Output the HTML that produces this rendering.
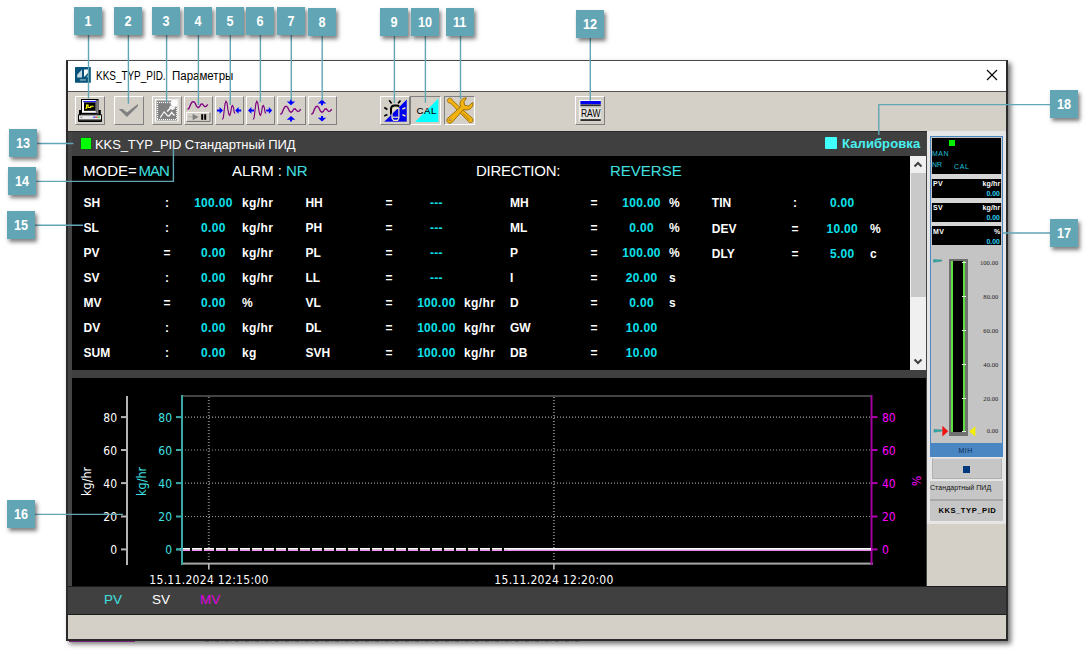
<!DOCTYPE html><html><head><meta charset='utf-8'><title>KKS_TYP_PID. Параметры</title><style>
*{box-sizing:border-box;margin:0;padding:0}
html,body{width:1089px;height:651px;background:#fff;overflow:hidden}
body{position:relative;font-family:"Liberation Sans",sans-serif;}
.abs{position:absolute}
#win{position:absolute;left:66px;top:60px;width:942px;height:581px;background:#d4d0c8;border:1px solid #4a4a4a;border-left:2px solid #2a2a2a;border-bottom:2px solid #2a2a2a;border-right:2px solid #2a2a2a;box-shadow:3px 3px 5px rgba(0,0,0,.55)}
.badge{position:absolute;width:28px;height:28px;background:#62a5b5;color:#fff;font-weight:bold;font-size:14.4px;line-height:28px;text-align:center;box-shadow:2px 3px 4px rgba(0,0,0,.5);z-index:30}
.badge span{display:inline-block;transform:scaleX(.88)}
.tb{position:absolute;top:96px;height:29px;border:1px solid;border-color:#fff #808080 #808080 #fff;background:#d4d0c8}
.tb.sunk{border-color:#808080 #fff #fff #808080}
.t{position:absolute;white-space:nowrap;line-height:1}
.lbl{position:absolute;white-space:nowrap;font-weight:bold;font-size:12px;line-height:14px;color:#fff}
.val{letter-spacing:.3px;position:absolute;white-space:nowrap;font-weight:bold;font-size:12px;line-height:14px;color:#0ce0ec;text-align:center;width:60px}
.ax{font-family:"DejaVu Sans",sans-serif;font-stretch:condensed;font-size:12px}
</style></head><body>
<div id="win"></div>
<div class="abs" style="left:68px;top:61px;width:938px;height:30px;background:#fff"></div>
<div class="abs" style="left:68px;top:91px;width:938px;height:1px;background:#555"></div>
<svg class="abs" style="left:75px;top:67px" width="16" height="16" viewBox="75 67 16 16"><rect x="75" y="67" width="15.8" height="15.8" rx="0.6" fill="#06527a"/><path d="M82 69.6 V77.4 H77.2 V74.8z" fill="#c4d8e2"/><path d="M84 69.4 H88.8 V72 L84.8 76.4 H84z" fill="#fff"/><path d="M88.4 74.6 V77.2 H86.4z" fill="#a8c4d0"/><rect x="79.8" y="79.2" width="6.2" height="1.5" fill="#7fa8ba"/></svg>
<div class="t" style="left:96px;top:69.5px;font-size:12.5px;color:#000;transform:scaleX(.795);transform-origin:0 0">KKS_TYP_PID.</div>
<div class="t" style="left:171.5px;top:69.5px;font-size:12.5px;color:#000;transform:scaleX(.92);transform-origin:0 0">Параметры</div>
<svg class="abs" style="left:986px;top:69px" width="12" height="12" viewBox="0 0 12 12"><path d="M1 1 L11 11 M11 1 L1 11" stroke="#000" stroke-width="1.1" fill="none"/></svg>
<div class="abs" style="left:68px;top:131px;width:859px;height:456px;background:#454545"></div>
<div class="abs" style="left:68px;top:131px;width:938px;height:1px;background:#2a2a2a"></div>
<div class="abs" style="left:71.5px;top:132px;width:854.5px;height:24px;background:#404040"></div>
<div class="abs" style="left:80px;top:137px;width:12px;height:13px;background:#2c4a2c"></div>
<div class="abs" style="left:81px;top:138px;width:10px;height:11px;background:#00ff00"></div>
<div class="t" style="left:95px;top:138px;font-size:13px;color:#fff;letter-spacing:-0.1px">KKS_TYP_PID Стандартный ПИД</div>
<div class="abs" style="left:825px;top:137px;width:12px;height:12px;background:#40ffff;border-radius:1px"></div>
<div class="t" style="left:842px;top:137px;font-size:13px;font-weight:bold;color:#48f2f2;letter-spacing:0.1px" id="kal">Калибровка</div>
<div class="abs" style="left:71.5px;top:156px;width:838.5px;height:214px;background:#000"></div>
<div class="abs" style="left:910px;top:156px;width:16px;height:214px;background:#f0f0f0"></div>
<div class="abs" style="left:911px;top:173px;width:15px;height:124px;background:#c9c9c9"></div>
<svg class="abs" style="left:910px;top:156px" width="16" height="17" viewBox="0 0 16 17"><path d="M4.5 10.5 L8 7 L11.5 10.5" stroke="#404040" stroke-width="2" fill="none"/></svg>
<svg class="abs" style="left:910px;top:353px" width="16" height="17" viewBox="0 0 16 17"><path d="M4.5 6.5 L8 10 L11.5 6.5" stroke="#404040" stroke-width="2" fill="none"/></svg>
<div class="t" style="left:83px;top:162.5px;font-size:15px;color:#fff;">MODE=</div>
<div class="t" style="left:138.6px;top:162.5px;font-size:15px;color:#40e0e0;letter-spacing:-1px">MAN</div>
<div class="t" style="left:232px;top:162.5px;font-size:15px;color:#fff;">ALRM :</div>
<div class="t" style="left:286px;top:162.5px;font-size:15px;color:#40e0e0;">NR</div>
<div class="t" style="left:476px;top:162.5px;font-size:15px;color:#fff;letter-spacing:-0.25px">DIRECTION:</div>
<div class="t" style="left:610px;top:162.5px;font-size:15px;color:#40e0e0;">REVERSE</div>
<div class="lbl" style="left:83.6px;top:196px">SH</div>
<div class="lbl" style="left:157px;top:196px;width:20px;text-align:center">:</div>
<div class="val" style="left:183.4px;top:196px">100.00</div>
<div class="lbl" style="left:242px;top:196px;letter-spacing:.4px">kg/hr</div>
<div class="lbl" style="left:83.6px;top:221px">SL</div>
<div class="lbl" style="left:157px;top:221px;width:20px;text-align:center">:</div>
<div class="val" style="left:183.4px;top:221px">0.00</div>
<div class="lbl" style="left:242px;top:221px;letter-spacing:.4px">kg/hr</div>
<div class="lbl" style="left:83.6px;top:246px">PV</div>
<div class="lbl" style="left:157px;top:246px;width:20px;text-align:center">=</div>
<div class="val" style="left:183.4px;top:246px">0.00</div>
<div class="lbl" style="left:242px;top:246px;letter-spacing:.4px">kg/hr</div>
<div class="lbl" style="left:83.6px;top:271px">SV</div>
<div class="lbl" style="left:157px;top:271px;width:20px;text-align:center">:</div>
<div class="val" style="left:183.4px;top:271px">0.00</div>
<div class="lbl" style="left:242px;top:271px;letter-spacing:.4px">kg/hr</div>
<div class="lbl" style="left:83.6px;top:296px">MV</div>
<div class="lbl" style="left:157px;top:296px;width:20px;text-align:center">=</div>
<div class="val" style="left:183.4px;top:296px">0.00</div>
<div class="lbl" style="left:242px;top:296px;letter-spacing:.4px">%</div>
<div class="lbl" style="left:83.6px;top:321px">DV</div>
<div class="lbl" style="left:157px;top:321px;width:20px;text-align:center">:</div>
<div class="val" style="left:183.4px;top:321px">0.00</div>
<div class="lbl" style="left:242px;top:321px;letter-spacing:.4px">kg/hr</div>
<div class="lbl" style="left:83.6px;top:346px">SUM</div>
<div class="lbl" style="left:157px;top:346px;width:20px;text-align:center">:</div>
<div class="val" style="left:183.4px;top:346px">0.00</div>
<div class="lbl" style="left:242px;top:346px;letter-spacing:.4px">kg</div>
<div class="lbl" style="left:305.4px;top:196px">HH</div>
<div class="lbl" style="left:379px;top:196px;width:20px;text-align:center">=</div>
<div class="val" style="left:406.4px;top:196px">---</div>
<div class="lbl" style="left:305.4px;top:221px">PH</div>
<div class="lbl" style="left:379px;top:221px;width:20px;text-align:center">=</div>
<div class="val" style="left:406.4px;top:221px">---</div>
<div class="lbl" style="left:305.4px;top:246px">PL</div>
<div class="lbl" style="left:379px;top:246px;width:20px;text-align:center">=</div>
<div class="val" style="left:406.4px;top:246px">---</div>
<div class="lbl" style="left:305.4px;top:271px">LL</div>
<div class="lbl" style="left:379px;top:271px;width:20px;text-align:center">=</div>
<div class="val" style="left:406.4px;top:271px">---</div>
<div class="lbl" style="left:305.4px;top:296px">VL</div>
<div class="lbl" style="left:379px;top:296px;width:20px;text-align:center">=</div>
<div class="val" style="left:406.4px;top:296px">100.00</div>
<div class="lbl" style="left:464px;top:296px;letter-spacing:.4px">kg/hr</div>
<div class="lbl" style="left:305.4px;top:321px">DL</div>
<div class="lbl" style="left:379px;top:321px;width:20px;text-align:center">=</div>
<div class="val" style="left:406.4px;top:321px">100.00</div>
<div class="lbl" style="left:464px;top:321px;letter-spacing:.4px">kg/hr</div>
<div class="lbl" style="left:305.4px;top:346px">SVH</div>
<div class="lbl" style="left:379px;top:346px;width:20px;text-align:center">=</div>
<div class="val" style="left:406.4px;top:346px">100.00</div>
<div class="lbl" style="left:464px;top:346px;letter-spacing:.4px">kg/hr</div>
<div class="lbl" style="left:510px;top:196px">MH</div>
<div class="lbl" style="left:584px;top:196px;width:20px;text-align:center">=</div>
<div class="val" style="left:611.6px;top:196px">100.00</div>
<div class="lbl" style="left:669px;top:196px;letter-spacing:.4px">%</div>
<div class="lbl" style="left:510px;top:221px">ML</div>
<div class="lbl" style="left:584px;top:221px;width:20px;text-align:center">=</div>
<div class="val" style="left:611.6px;top:221px">0.00</div>
<div class="lbl" style="left:669px;top:221px;letter-spacing:.4px">%</div>
<div class="lbl" style="left:510px;top:246px">P</div>
<div class="lbl" style="left:584px;top:246px;width:20px;text-align:center">=</div>
<div class="val" style="left:611.6px;top:246px">100.00</div>
<div class="lbl" style="left:669px;top:246px;letter-spacing:.4px">%</div>
<div class="lbl" style="left:510px;top:271px">I</div>
<div class="lbl" style="left:584px;top:271px;width:20px;text-align:center">=</div>
<div class="val" style="left:611.6px;top:271px">20.00</div>
<div class="lbl" style="left:669px;top:271px;letter-spacing:.4px">s</div>
<div class="lbl" style="left:510px;top:296px">D</div>
<div class="lbl" style="left:584px;top:296px;width:20px;text-align:center">=</div>
<div class="val" style="left:611.6px;top:296px">0.00</div>
<div class="lbl" style="left:669px;top:296px;letter-spacing:.4px">s</div>
<div class="lbl" style="left:510px;top:321px">GW</div>
<div class="lbl" style="left:584px;top:321px;width:20px;text-align:center">=</div>
<div class="val" style="left:611.6px;top:321px">10.00</div>
<div class="lbl" style="left:510px;top:346px">DB</div>
<div class="lbl" style="left:584px;top:346px;width:20px;text-align:center">=</div>
<div class="val" style="left:611.6px;top:346px">10.00</div>
<div class="lbl" style="left:711.8px;top:196px">TIN</div>
<div class="lbl" style="left:785px;top:196px;width:20px;text-align:center">:</div>
<div class="val" style="left:812.3px;top:196px">0.00</div>
<div class="lbl" style="left:711.8px;top:222px">DEV</div>
<div class="lbl" style="left:785px;top:222px;width:20px;text-align:center">=</div>
<div class="val" style="left:812.3px;top:222px">10.00</div>
<div class="lbl" style="left:870px;top:222px;letter-spacing:.4px">%</div>
<div class="lbl" style="left:711.8px;top:247px">DLY</div>
<div class="lbl" style="left:785px;top:247px;width:20px;text-align:center">=</div>
<div class="val" style="left:812.3px;top:247px">5.00</div>
<div class="lbl" style="left:870px;top:247px;letter-spacing:.4px">c</div>
<div class="abs" style="left:72px;top:370px;width:854px;height:8px;background:#404040"></div>
<div class="abs" style="left:71.5px;top:378px;width:854.5px;height:208px;background:#000"></div>
<svg class="abs" style="left:72px;top:378px" width="854" height="208" viewBox="72 378 854 208"><rect x="126" y="396" width="2" height="169" fill="#b4b4b4"/><rect x="121" y="416.1" width="6" height="2" fill="#b4b4b4"/><text x="117" y="422.0" text-anchor="end" class="ax" fill="#fff">80</text><rect x="121" y="449.0" width="6" height="2" fill="#b4b4b4"/><text x="117" y="454.9" text-anchor="end" class="ax" fill="#fff">60</text><rect x="121" y="482.1" width="6" height="2" fill="#b4b4b4"/><text x="117" y="488.0" text-anchor="end" class="ax" fill="#fff">40</text><rect x="121" y="515.5" width="6" height="2" fill="#b4b4b4"/><text x="117" y="521.4" text-anchor="end" class="ax" fill="#fff">20</text><rect x="121" y="548.4" width="6" height="2" fill="#b4b4b4"/><text x="117" y="554.3" text-anchor="end" class="ax" fill="#fff">0</text><rect x="181" y="395" width="2" height="170" fill="#3ba8a8"/><rect x="176" y="416.1" width="6" height="2" fill="#3ba8a8"/><text x="172" y="422.0" text-anchor="end" class="ax" fill="#40e0e0">80</text><rect x="176" y="449.0" width="6" height="2" fill="#3ba8a8"/><text x="172" y="454.9" text-anchor="end" class="ax" fill="#40e0e0">60</text><rect x="176" y="482.1" width="6" height="2" fill="#3ba8a8"/><text x="172" y="488.0" text-anchor="end" class="ax" fill="#40e0e0">40</text><rect x="176" y="515.5" width="6" height="2" fill="#3ba8a8"/><text x="172" y="521.4" text-anchor="end" class="ax" fill="#40e0e0">20</text><rect x="176" y="548.4" width="6" height="2" fill="#3ba8a8"/><text x="172" y="554.3" text-anchor="end" class="ax" fill="#40e0e0">0</text><rect x="183" y="395.4" width="688" height="1.2" fill="#707070"/><rect x="183" y="562.6" width="690" height="2" fill="#a8a8a8"/><rect x="870.5" y="395" width="2" height="170" fill="#a000a0"/><rect x="871" y="416.1" width="6.5" height="2" fill="#b000b0"/><text x="882" y="422.0" class="ax" fill="#ff00ff">80</text><rect x="871" y="449.0" width="6.5" height="2" fill="#b000b0"/><text x="882" y="454.9" class="ax" fill="#ff00ff">60</text><rect x="871" y="482.1" width="6.5" height="2" fill="#b000b0"/><text x="882" y="488.0" class="ax" fill="#ff00ff">40</text><rect x="871" y="515.5" width="6.5" height="2" fill="#b000b0"/><text x="882" y="521.4" class="ax" fill="#ff00ff">20</text><rect x="871" y="548.4" width="6.5" height="2" fill="#b000b0"/><text x="882" y="554.3" class="ax" fill="#ff00ff">0</text><line x1="185" x2="870" y1="417.1" y2="417.1" stroke="#9a9a9a" stroke-width="1.2" stroke-dasharray="1 2"/><line x1="185" x2="870" y1="450.0" y2="450.0" stroke="#9a9a9a" stroke-width="1.2" stroke-dasharray="1 2"/><line x1="185" x2="870" y1="483.1" y2="483.1" stroke="#9a9a9a" stroke-width="1.2" stroke-dasharray="1 2"/><line x1="185" x2="870" y1="516.5" y2="516.5" stroke="#9a9a9a" stroke-width="1.2" stroke-dasharray="1 2"/><line x1="208.8" x2="208.8" y1="397" y2="562" stroke="#787878" stroke-width="2" stroke-dasharray="1 2"/><rect x="208.0" y="563" width="1.6" height="6.5" fill="#b8b8b8"/><line x1="553.9" x2="553.9" y1="397" y2="562" stroke="#787878" stroke-width="2" stroke-dasharray="1 2"/><rect x="553.1" y="563" width="1.6" height="6.5" fill="#b8b8b8"/><line x1="180" x2="510" y1="550.3" y2="550.3" stroke="#f58cf5" stroke-width="1.3" stroke-dasharray="10 2"/><line x1="180" x2="510" y1="548.9" y2="548.9" stroke="#fff" stroke-width="1.8" stroke-dasharray="10 2"/><rect x="509" y="549.65" width="362" height="1.3" fill="#f58cf5"/><rect x="509" y="548" width="362" height="1.8" fill="#fff"/><rect x="176" y="548.4" width="7" height="2" fill="#3ba8a8"/><rect x="181" y="540" width="2" height="20" fill="#3ba8a8"/><text x="209" y="584" text-anchor="middle" class="ax" fill="#fff" style="font-size:12px;letter-spacing:0.3px">15.11.2024 12:15:00</text><text x="554" y="584" text-anchor="middle" class="ax" fill="#fff" style="font-size:12px;letter-spacing:0.3px">15.11.2024 12:20:00</text><text transform="translate(91,496) rotate(-90)" class="ax" fill="#fff" style="font-size:12.5px">kg/hr</text><text transform="translate(146,496) rotate(-90)" class="ax" fill="#40e0e0" style="font-size:12.5px">kg/hr</text><text transform="translate(921,486) rotate(-90)" class="ax" fill="#ff00ff" style="font-size:12px">%</text></svg>
<div class="abs" style="left:68px;top:586px;width:938px;height:29px;background:#1c1c1c"></div>
<div class="abs" style="left:68px;top:587px;width:938px;height:27px;background:#404040"></div>
<div class="t" style="left:104px;top:593px;font-size:13.5px;color:#40e0e0;">PV</div>
<div class="t" style="left:152px;top:593px;font-size:13.5px;color:#fff;">SV</div>
<div class="t" style="left:200px;top:593px;font-size:13.5px;color:#e000e0;">MV</div>
<div class="abs" style="left:68px;top:615.4px;width:938px;height:23.6px;background:#d4d0c8"></div>
<div class="abs" style="left:205px;top:641px;width:375px;height:1.4px;background:repeating-linear-gradient(90deg,#333 0 4px,transparent 4px 6px,#444 6px 7px,transparent 7px 10px);opacity:.35"></div>
<div class="abs" style="left:69px;top:640.6px;width:66px;height:1.2px;background:#7a2a7a"></div>
<div class="tb" style="left:75px;width:30px"></div>
<div class="tb" style="left:114px;width:30px"></div>
<div class="tb" style="left:152px;width:30px"></div>
<div class="tb" style="left:184px;width:29px"></div>
<div class="tb" style="left:215px;width:29px"></div>
<div class="tb" style="left:246px;width:29px"></div>
<div class="tb" style="left:277px;width:29px"></div>
<div class="tb" style="left:308px;width:29px"></div>
<div class="tb" style="left:380px;width:30px"></div>
<div class="tb sunk" style="left:410px;width:31px"></div>
<div class="tb sunk" style="left:444px;width:31px"></div>
<div class="tb" style="left:575px;width:30px"></div>
<svg class="abs" style="left:76px;top:97px" width="30" height="28" viewBox="76 97 30 28">
<rect x="81" y="99" width="17.5" height="15" fill="#000"/>
<rect x="82" y="100" width="14.5" height="13" fill="#c8c8c8"/>
<rect x="82" y="100" width="13" height="12" fill="#fff"/>
<rect x="83.2" y="101" width="12.8" height="1.3" fill="#2020ff"/>
<rect x="84" y="102.4" width="11.6" height="8.4" fill="#000"/>
<path d="M85.3 108.3 h1.3 v-3.2 h1.5 v2.4 h2.6 v-1.2 h1.5" stroke="#ffff00" stroke-width="1.1" fill="none"/>
<path d="M92.4 105.2 l1.6 1.1 l-1.6 1.1z" fill="#ffff00"/>
<rect x="96.6" y="100.5" width="1.6" height="13" fill="#808080"/>
<rect x="79" y="110" width="2" height="5" fill="#000"/><rect x="98.5" y="110" width="2.3" height="5" fill="#000"/>
<rect x="78" y="114.3" width="24" height="7.8" rx="1" fill="#000"/>
<rect x="79" y="115.3" width="22" height="4" fill="#e8e8e8"/>
<rect x="79" y="119.3" width="22" height="1" fill="#909090"/>
<rect x="80.3" y="116.8" width="2" height="0.9" fill="#707070"/>
<rect x="93.2" y="116.6" width="2.2" height="1.2" fill="#2030ff"/><rect x="95.4" y="116.6" width="2.2" height="1.2" fill="#ff2020"/><rect x="97.6" y="116.6" width="2.2" height="1.2" fill="#20e020"/>
</svg>
<svg class="abs" style="left:114px;top:97px" width="30" height="28" viewBox="114 97 30 28"><path d="M118.8 109.1 H122.7 L126.9 112.5 L137.9 103.9 V106.3 L126.9 117 Z" fill="#808080"/></svg>
<svg class="abs" style="left:152px;top:97px" width="30" height="28" viewBox="152 97 30 28">
<rect x="155" y="99" width="23.5" height="22.4" fill="#fff"/>
<rect x="156.4" y="100.4" width="20.8" height="20.2" fill="#8a8a8a"/>
<path d="M157 102.5 H177 M157 119.5 H177" stroke="#fff" stroke-width="1" stroke-dasharray="1 1"/>
<path d="M157.5 102 V120 M176.5 102 V120" stroke="#fff" stroke-width="1" stroke-dasharray="1 1"/>
<rect x="158.9" y="103.9" width="17.2" height="14.6" fill="#808080"/>
<path d="M160.2 117.6 L164.1 111.8 L167.8 115.9 L169.4 115.9 L171.7 112.3 L173.5 114.9 L174.8 114.9" stroke="#fff" stroke-width="1.1" fill="none"/>
<path d="M167.2 111.4 L172 106.4" stroke="#fff" stroke-width="1.5"/>
<path d="M169 107.6 L171.6 104.6 L175.6 108 L172.4 110.2z" fill="#f4f4f4"/>
<circle cx="174.5" cy="103.1" r="3.9" fill="#fff" stroke="#c8c8c8" stroke-width="0.5"/>
</svg>
<svg class="abs" style="left:184px;top:97px" width="29" height="28" viewBox="184 97 29 28">
<path d="M187.6 109.4 L189.2 108 L190.6 104.4 L192.2 101.8 L193.6 101.6 L195 103 L196.6 106.4 L198.2 107.6 L199.6 106.6 L201 104.2 L202.4 104 L203.6 105.6 L205 106.8 L206.4 106.2 L207.8 104.4" stroke="#800080" stroke-width="1.3" fill="none"/>
<rect x="186.6" y="112.4" width="23.4" height="9" fill="#d4d0c8"/>
<path d="M186.6 121.4 V112.4 H210" stroke="#fff" stroke-width="1" fill="none"/>
<path d="M186.6 121.4 H210 V112.4" stroke="#707070" stroke-width="1" fill="none"/>
<rect x="188" y="116.2" width="5" height="1.2" fill="#b8b8b8"/>
<path d="M192.6 113.8 L198.6 117 L192.6 120.2z" fill="#808080"/>
<rect x="201.2" y="114.2" width="2" height="5.6" fill="#000"/><rect x="204.2" y="114.2" width="2" height="5.6" fill="#000"/>
</svg>
<svg class="abs" style="left:215px;top:97px" width="29" height="28" viewBox="215 97 29 28"><path d="M217 109.4 H219.6 V107.0 L223 110.4 L219.6 113.80000000000001 V111.4 H217z" fill="#0000ff"/><path d="M222.4 119.6 L223.4 117.4 L224.0 112 L225.0 104 L226.0 101.4 L227.0 103 L227.8 109 L228.8 114.2 L229.8 115.4 L230.8 112 L231.6 106.6 L232.6 105.6 L233.6 108 L234.20000000000002 112 L235.0 113.6" stroke="#800080" stroke-width="1.15" fill="none"/><path d="M241.2 109.4 H238.6 V107.0 L235.2 110.4 L238.6 113.80000000000001 V111.4 H241.2z" fill="#0000ff"/></svg>
<svg class="abs" style="left:246px;top:97px" width="29" height="28" viewBox="246 97 29 28"><path d="M254 109.4 H251.4 V107.0 L248 110.4 L251.4 113.80000000000001 V111.4 H254z" fill="#0000ff"/><path d="M253.2 119.6 L254.2 117.4 L254.79999999999998 112 L255.79999999999998 104 L256.8 101.4 L257.8 103 L258.59999999999997 109 L259.59999999999997 114.2 L260.59999999999997 115.4 L261.59999999999997 112 L262.4 106.6 L263.4 105.6 L264.4 108 L265.0 112 L265.8 113.6" stroke="#800080" stroke-width="1.15" fill="none"/><path d="M266.2 109.4 H268.8 V107.0 L272.2 110.4 L268.8 113.80000000000001 V111.4 H266.2z" fill="#0000ff"/></svg>
<svg class="abs" style="left:277px;top:97px" width="29" height="28" viewBox="277 97 29 28"><path d="M290 99.6 V101.39999999999999 H286.8 L291 105.19999999999999 L295.2 101.39999999999999 H292 V99.6z" fill="#0000ff"/><path d="M280.4 114.4 L282.0 113 L283.4 109.4 L285.0 106.6 L286.4 106.2 L287.79999999999995 107.6 L289.4 111 L291.0 112.4 L292.4 111.4 L293.79999999999995 109 L295.2 108.8 L296.4 110.4 L297.79999999999995 111.6 L299.2 111 L300.79999999999995 109.2" stroke="#800080" stroke-width="1.3" fill="none"/><path d="M290 121.6 V119.8 H286.8 L291 116 L295.2 119.8 H292 V121.6z" fill="#0000ff"/></svg>
<svg class="abs" style="left:308px;top:97px" width="29" height="28" viewBox="308 97 29 28"><path d="M321 105.19999999999999 V103.39999999999999 H317.8 L322 99.6 L326.2 103.39999999999999 H323 V105.19999999999999z" fill="#0000ff"/><path d="M311.4 114.4 L313.0 113 L314.4 109.4 L316.0 106.6 L317.4 106.2 L318.79999999999995 107.6 L320.4 111 L322.0 112.4 L323.4 111.4 L324.79999999999995 109 L326.2 108.8 L327.4 110.4 L328.79999999999995 111.6 L330.2 111 L331.79999999999995 109.2" stroke="#800080" stroke-width="1.3" fill="none"/><path d="M321 116 V117.8 H317.8 L322 121.6 L326.2 117.8 H323 V116z" fill="#0000ff"/></svg>
<svg class="abs" style="left:380px;top:97px" width="30" height="28" viewBox="380 97 30 28">
<path d="M407 99 V121.9 H383.7z" fill="#0000f0" stroke="#e8e0b0" stroke-width="0.5"/>
<g stroke="#000" stroke-width="1.7" fill="none">
<path d="M389.2 100.3 L391.6 103.4 M400.5 100.5 L398.1 103.4 M384.3 107.6 L387.4 109.4 M384.3 115.9 L387.4 114.4"/>
<path d="M391 114.8 V109.4 C391 107 392.6 105.6 394.6 105.6 H397 C398 105.6 398.6 106 399 106.6" stroke-width="2"/>
</g>
<g stroke="#efe6bc" stroke-width="1.2" fill="none">
<path d="M402.3 109.1 L405.4 107.8 M402.5 114.6 L405.4 116.2" stroke-width="1.5"/>
<path d="M392 113.6 V118.2 L393.6 120.4 H397.6 L398.9 118.2 V108.4 H394.2 L392.6 111"/>
<path d="M392 117.2 H398.8"/>
</g>
</svg>
<svg class="abs" style="left:410px;top:97px" width="31" height="28" viewBox="410 97 31 28">
<path d="M438.4 98.6 V122 H415z" fill="#00ffff"/>
<text x="416.6" y="113.9" font-family="Liberation Sans, sans-serif" font-size="9.6" letter-spacing="0.6" fill="#000" stroke="#000" stroke-width="0.1">CAL</text>
</svg>
<svg class="abs" style="left:444px;top:96px" width="31" height="29" viewBox="444 96 31 29">
<g stroke="#9a6a00" stroke-width="0.9" fill="#f2b311" stroke-linejoin="round">
<path d="M449.4 98.2 C448 98.4 447 100 447.6 101.6 C448 102.6 449.2 103.2 450.4 103 L468.6 121.6 C469.6 122.8 471.4 122.8 472.4 121.8 C473.4 120.8 473.2 119.2 472.2 118.2 L452.6 100.6 C452.6 99.2 451 98 449.4 98.2z"/>
<path d="M466.6 98 C463.4 97.6 460.4 99.8 460 103 C459.8 104.4 460.2 105.6 460.8 106.6 L448 118 C446.6 119.2 446.6 121.2 447.8 122.4 C449 123.6 451 123.4 452.2 122.2 L463.6 109.4 C466.4 110.6 470 109.8 471.8 107.4 C473 105.8 473.2 104 472.8 102.4 L468.6 106 L464.6 105.2 L464 101.6z"/>
</g>
<rect x="449.2" y="119" width="1.8" height="1.8" fill="#e8e0c8" stroke="#9a6a00" stroke-width="0.5"/>
<path d="M463 113.6 L469.6 120" stroke="#9a6a00" stroke-width="0.8"/>
</svg>
<svg class="abs" style="left:575px;top:97px" width="30" height="28" viewBox="575 97 30 28">
<rect x="579.6" y="100.2" width="21.4" height="21" fill="#e4e2dc"/>
<path d="M579.8 121 V100.4 H601" stroke="#fff" stroke-width="1" fill="none"/>
<rect x="580.4" y="101" width="20.4" height="3.3" fill="#0000f0"/>
<rect x="580.4" y="104.6" width="20.4" height="1.2" fill="#000"/>
<rect x="580.4" y="119.3" width="20.4" height="1.5" fill="#000"/>
<rect x="580.4" y="106" width="20.4" height="1.6" fill="#b8b8b8"/>
<text x="581" y="117.2" font-family="Liberation Sans, sans-serif" font-size="11.4" fill="#000" textLength="19.4" lengthAdjust="spacingAndGlyphs">RAW</text>
</svg>
<div class="abs" style="left:927px;top:131px;width:79px;height:393px;background:#e6e6e6"></div>
<div class="abs" style="left:930px;top:136px;width:73px;height:321px;background:#c4c4c4;border:1px solid #4f86c4"></div>
<div class="abs" style="left:932px;top:138px;width:69px;height:36px;background:#000"></div>
<div class="abs" style="left:931px;top:174px;width:71px;height:4.5px;background:#d6d6d6"></div>
<div class="abs" style="left:931px;top:198px;width:71px;height:4.5px;background:#d6d6d6"></div>
<div class="abs" style="left:931px;top:222px;width:71px;height:4.5px;background:#d6d6d6"></div>
<div class="abs" style="left:932px;top:178.5px;width:69px;height:19px;background:#000"></div>
<div class="abs" style="left:932px;top:202.5px;width:69px;height:19px;background:#000"></div>
<div class="abs" style="left:932px;top:226.3px;width:69px;height:18.7px;background:#000"></div>
<div class="abs" style="left:949px;top:139.5px;width:6.3px;height:6.3px;background:#00f000"></div>
<div class="t" style="left:932px;top:150.4px;font-size:7px;color:#1cc0dc;letter-spacing:0.5px">MAN</div>
<div class="t" style="left:932px;top:161.4px;font-size:7px;color:#1cc0dc;">NR</div>
<div class="t" style="left:954px;top:163.4px;font-size:7px;color:#1cc0dc;letter-spacing:0.6px">CAL</div>
<div class="t" style="left:933px;top:179.8px;font-size:7px;color:#fff;font-weight:bold;letter-spacing:0.3px">PV</div>
<div class="t" style="right:88.5px;top:179.8px;font-size:7px;color:#fff;font-weight:bold;letter-spacing:0.2px">kg/hr</div>
<div class="t" style="right:89px;top:189.8px;font-size:7px;color:#30d0f4;font-weight:bold">0.00</div>
<div class="t" style="left:933px;top:203.8px;font-size:7px;color:#fff;font-weight:bold;letter-spacing:0.3px">SV</div>
<div class="t" style="right:88.5px;top:203.8px;font-size:7px;color:#fff;font-weight:bold;letter-spacing:0.2px">kg/hr</div>
<div class="t" style="right:89px;top:213.8px;font-size:7px;color:#30d0f4;font-weight:bold">0.00</div>
<div class="t" style="left:933px;top:227.6px;font-size:7px;color:#fff;font-weight:bold;letter-spacing:0.3px">MV</div>
<div class="t" style="right:88.5px;top:227.6px;font-size:7px;color:#fff;font-weight:bold;letter-spacing:0.2px">%</div>
<div class="t" style="right:89px;top:237.6px;font-size:7px;color:#30d0f4;font-weight:bold">0.00</div>
<div class="abs" style="left:949px;top:259px;width:18.5px;height:176.5px;background:#707070"></div>
<div class="abs" style="left:950.6px;top:260.6px;width:15px;height:171px;background:#60e040"></div>
<div class="abs" style="left:952.6px;top:260.6px;width:10.2px;height:171px;background:#000"></div>
<div class="abs" style="left:964.8px;top:260.6px;width:1.2px;height:171px;background:#707070"></div>
<div class="abs" style="left:962.4px;top:261.9px;width:3.4px;height:1px;background:#e0ffe0"></div>
<div class="t" style="right:90.60000000000002px;top:259.59999999999997px;font-size:6.5px;color:#202020;font-family:&quot;Liberation Serif&quot;,serif;letter-spacing:0.1px">100.00</div>
<div class="abs" style="left:962.4px;top:296.0px;width:3.4px;height:1px;background:#e0ffe0"></div>
<div class="t" style="right:90.60000000000002px;top:293.7px;font-size:6.5px;color:#202020;font-family:&quot;Liberation Serif&quot;,serif;letter-spacing:0.1px">80.00</div>
<div class="abs" style="left:962.4px;top:329.9px;width:3.4px;height:1px;background:#e0ffe0"></div>
<div class="t" style="right:90.60000000000002px;top:327.59999999999997px;font-size:6.5px;color:#202020;font-family:&quot;Liberation Serif&quot;,serif;letter-spacing:0.1px">60.00</div>
<div class="abs" style="left:962.4px;top:364.0px;width:3.4px;height:1px;background:#e0ffe0"></div>
<div class="t" style="right:90.60000000000002px;top:361.7px;font-size:6.5px;color:#202020;font-family:&quot;Liberation Serif&quot;,serif;letter-spacing:0.1px">40.00</div>
<div class="abs" style="left:962.4px;top:397.9px;width:3.4px;height:1px;background:#e0ffe0"></div>
<div class="t" style="right:90.60000000000002px;top:395.59999999999997px;font-size:6.5px;color:#202020;font-family:&quot;Liberation Serif&quot;,serif;letter-spacing:0.1px">20.00</div>
<div class="abs" style="left:962.4px;top:430.5px;width:3.4px;height:1px;background:#e0ffe0"></div>
<div class="t" style="right:90.60000000000002px;top:428.2px;font-size:6.5px;color:#202020;font-family:&quot;Liberation Serif&quot;,serif;letter-spacing:0.1px">0.00</div>
<svg class="abs" style="left:932px;top:255px" width="48" height="185" viewBox="932 255 48 185"><path d="M933.6 259.6 L941.8 260 L941.8 261 L933.6 262.2z" fill="#30b0b0" stroke="#207070" stroke-width="0.4"/><path d="M934 429.4 L942.2 430 L942.2 431 L934 432.2z" fill="#30b0b0" stroke="#207070" stroke-width="0.4"/><path d="M942.4 425.8 L948.2 431.2 L942.4 436.6z" fill="#f01010"/><path d="M975.4 426.2 L969.2 431.4 L975.4 436.6z" fill="#f4f000"/></svg>
<div class="abs" style="left:930px;top:443.4px;width:73px;height:13.6px;background:#4a86c2"></div>
<div class="t" style="left:958.6px;top:446.6px;font-size:7px;color:#0c2c54;letter-spacing:0.4px">МІН</div>
<div class="abs" style="left:931.6px;top:458px;width:70px;height:21.4px;background:#c6c6c6;border:1px solid #b0b0b0;border-top-color:#dcdcdc"></div>
<div class="abs" style="left:963px;top:466px;width:7px;height:7px;background:#003a7c"></div>
<div class="abs" style="left:929.6px;top:481px;width:73.4px;height:18.6px;background:#c6c6c6"></div>
<div class="abs" style="left:929.6px;top:499.4px;width:73.4px;height:1.2px;background:#a8a8a8"></div>
<div class="abs" style="left:929.6px;top:501px;width:73.4px;height:19.6px;background:#c6c6c6"></div>
<div class="t" style="left:930px;top:484px;font-size:7px;color:#101010;letter-spacing:0.05px">Стандартный ПИД</div>
<div class="t" style="left:938.4px;top:507.4px;font-size:7.6px;color:#000;font-weight:bold;letter-spacing:0.55px">KKS_TYP_PID</div>
<svg class="abs" style="left:0;top:0;z-index:20;pointer-events:none" width="1089" height="651" viewBox="0 0 1089 651"><g stroke="#62a5b5" stroke-width="1.4" fill="none"><path d="M88.5 35 V98.6"/><path d="M128.4 35 V103.8"/><path d="M166.6 35 V102.4"/><path d="M198.4 35 V105"/><path d="M230.3 35 V105"/><path d="M260.4 35 V102"/><path d="M291.3 35 V100.6"/><path d="M322.2 36 V100.6"/><path d="M394.4 36 V103"/><path d="M425.4 36 V102.8"/><path d="M460.5 36 V99"/><path d="M590.3 38 V100.8"/><path d="M37 143.5 H73.4"/><path d="M36 181.4 H173.4 V148.4"/><path d="M35 225.2 H83"/><path d="M35 514.4 H123"/><path d="M1050 233 H1003"/><path d="M1050 104.6 H878.8 V135"/></g></svg>
<div class="badge" style="left:74px;top:7px"><span>1</span></div>
<div class="badge" style="left:114px;top:7px"><span>2</span></div>
<div class="badge" style="left:152px;top:7px"><span>3</span></div>
<div class="badge" style="left:184px;top:7px"><span>4</span></div>
<div class="badge" style="left:216px;top:7px"><span>5</span></div>
<div class="badge" style="left:246px;top:7px"><span>6</span></div>
<div class="badge" style="left:277px;top:7px"><span>7</span></div>
<div class="badge" style="left:308px;top:8px"><span>8</span></div>
<div class="badge" style="left:380px;top:8px"><span>9</span></div>
<div class="badge" style="left:411px;top:8px"><span>10</span></div>
<div class="badge" style="left:446px;top:8px"><span>11</span></div>
<div class="badge" style="left:576px;top:10px"><span>12</span></div>
<div class="badge" style="left:9px;top:129px"><span>13</span></div>
<div class="badge" style="left:8px;top:167px"><span>14</span></div>
<div class="badge" style="left:7px;top:211px"><span>15</span></div>
<div class="badge" style="left:7px;top:500px"><span>16</span></div>
<div class="badge" style="left:1050px;top:219px"><span>17</span></div>
<div class="badge" style="left:1050px;top:90px"><span>18</span></div>
</body></html>
